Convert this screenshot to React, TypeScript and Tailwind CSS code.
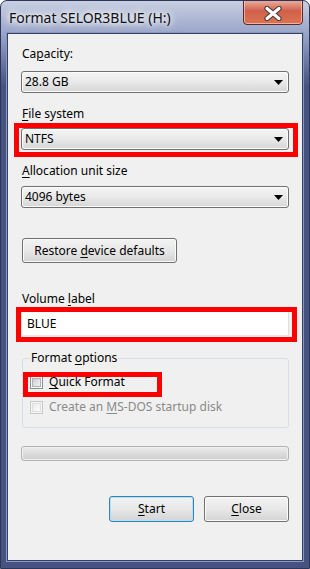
import React from 'react';

function U({ children }: { children: React.ReactNode }) {
  return <span className="underline underline-offset-[2px] decoration-1">{children}</span>;
}

function Combo({ value }: { value: string }) {
  return (
    <div className="flex h-[22px] items-center justify-between rounded-[3px] border border-[#707070] bg-gradient-to-b from-[#f4f4f4] via-[#e9e9e9] to-[#d6d6d6] pl-[3px] pr-[5px] shadow-[inset_0_0_0_1px_#fcfcfc]">
      <span>{value}</span>
      <svg width="9" height="5" viewBox="0 0 9 5">
        <path d="M0 0h9L4.5 5z" fill="#000" />
      </svg>
    </div>
  );
}

function Button({ children, focused, className }: { children: React.ReactNode; focused?: boolean; className?: string }) {
  return (
    <div
      className={
        'flex items-center justify-center rounded-[3px] border bg-gradient-to-b from-[#f3f3f3] from-0% via-[#e8e8e8] via-50% to-[#d3d3d3] to-100% ' +
        (focused
          ? 'border-[#3c7fb1] shadow-[inset_0_0_0_1px_#a9e4f8] '
          : 'border-[#707070] shadow-[inset_0_0_0_1px_#fbfbfb] ') +
        (className ?? '')
      }
    >
      {children}
    </div>
  );
}

function Check({ disabled, children }: { disabled?: boolean; children: React.ReactNode }) {
  return (
    <div className={'flex h-[16px] items-center gap-[6px] ' + (disabled ? 'text-[#8a8a8a]' : 'text-black')}>
      <div
        className={
          'flex h-[13px] w-[13px] items-center justify-center border bg-[#f6f6f6] ' +
          (disabled ? 'border-[#c8c8c8]' : 'border-[#8e8f8f]')
        }
      >
        <div
          className={
            'h-[9px] w-[9px] border bg-gradient-to-br ' +
            (disabled
              ? 'border-[#dedede] from-[#ececec] to-[#fbfbfb]'
              : 'border-[#aeb1b6] from-[#c8ccd2] to-[#f4f4f4]')
          }
        />
      </div>
      <span>{children}</span>
    </div>
  );
}

function RedBox({ className }: { className: string }) {
  return <div className={'pointer-events-none absolute z-10 border-[5px] border-[#ff0000] ' + className} />;
}

export default function App() {
  return (
    <div className="flex h-[569px] w-[310px] flex-col overflow-hidden rounded-t-[7px] border border-[#2c3658] bg-gradient-to-b from-[#c8cfe1] from-0% via-[#8f9bc3] via-[7%] to-[#46527f] to-[15%] [font-family:'Noto_Sans','Open_Sans',sans-serif] text-[12px] leading-[16px] text-black">
      {/* title bar */}
      <div className="flex h-[32px] shrink-0 items-start justify-between">
        <div className="pl-[8px] pt-[8px] text-[14px] leading-[18px] text-[#101010] [text-shadow:0_0_8px_#ffffff,0_0_12px_#ffffff,0_0_4px_#ffffff]">
          Format SELOR3BLUE (H:)
        </div>
        <div className="mr-[6px] mt-[-2px] flex h-[26px] w-[60px] items-center justify-center rounded-b-[4px] border border-[#5a2a28] bg-gradient-to-b from-[#eab2a4] from-0% via-[#d0604a] via-[45%] to-[#dd7350] to-100% shadow-[inset_0_0_0_1px_rgba(255,220,210,0.6)]">
          <svg width="18" height="15" viewBox="0 0 18 15" className="mt-[2px]">
            <path d="M3 2.5L15 12.5M15 2.5L3 12.5" stroke="#3b3b3b" strokeWidth="5.2" strokeLinecap="round" />
            <path d="M3 2.5L15 12.5M15 2.5L3 12.5" stroke="#ffffff" strokeWidth="3.2" strokeLinecap="round" />
          </svg>
        </div>
      </div>

      {/* client area */}
      <div className="mx-[6px] mb-[7px] flex flex-1 flex-col border border-[#34406a] bg-[#f0f0f0] px-[13px] shadow-[0_0_0_1px_#8c97bd]">
        <div className="mt-[12px] pl-[1px]">
          Ca<U>p</U>acity:
        </div>
        <div className="mt-[9px]">
          <Combo value="28.8 GB" />
        </div>

        <div className="mt-[13px] pl-[1px]">
          <U>F</U>ile system
        </div>
        <div className="relative mt-[6px]">
          <RedBox className="-left-[7px] -right-[9px] -top-[5px] -bottom-[7px]" />
          <Combo value="NTFS" />
        </div>

        <div className="mt-[13px] pl-[1px]">
          <U>A</U>llocation unit size
        </div>
        <div className="mt-[7px]">
          <Combo value="4096 bytes" />
        </div>

        <Button className="ml-[1px] mt-[30px] h-[25px] w-[155px]">
          <span>
            Restore <U>d</U>evice defaults
          </span>
        </Button>

        <div className="mt-[28px] pl-[1px]">
          Volume <U>l</U>abel
        </div>
        <div className="relative mt-[4px]">
          <RedBox className="-left-[5px] -right-[8px] -top-[4px] -bottom-[6px]" />
          <div className="flex h-[25px] items-center rounded-[2px] border border-[#abadb3] border-b-[#e3e9ef] border-x-[#dbdfe6] bg-white pl-[5px]">
            BLUE
          </div>
        </div>

        <fieldset className="ml-[1px] mt-[14px] rounded-[3px] border border-[#d5dfe5] pb-[12px] pl-[7px] pr-[7px]">
          <legend className="ml-[0px] px-[1px]">
            Format <U>o</U>ptions
          </legend>
          <div className="relative mt-[8px]">
            <RedBox className="-left-[7px] -top-[2px] h-[25px] w-[139px]" />
            <Check>
              <U>Q</U>uick Format
            </Check>
          </div>
          <div className="mt-[9px]">
            <Check disabled>
              Create an <U>M</U>S-DOS startup disk
            </Check>
          </div>
        </fieldset>

        <div className="mt-[18px] h-[15px] rounded-[3px] border border-[#b2b2b2] bg-gradient-to-b from-[#ececec] via-[#dcdcdc] to-[#cdcdcd] shadow-[inset_0_0_0_1px_#f0f0f0]" />

        <div className="mt-[35px] flex justify-end gap-[10px]">
          <Button focused className="h-[26px] w-[85px]">
            <span>
              <U>S</U>tart
            </span>
          </Button>
          <Button className="h-[26px] w-[85px]">
            <span>
              <U>C</U>lose
            </span>
          </Button>
        </div>
      </div>
    </div>
  );
}
